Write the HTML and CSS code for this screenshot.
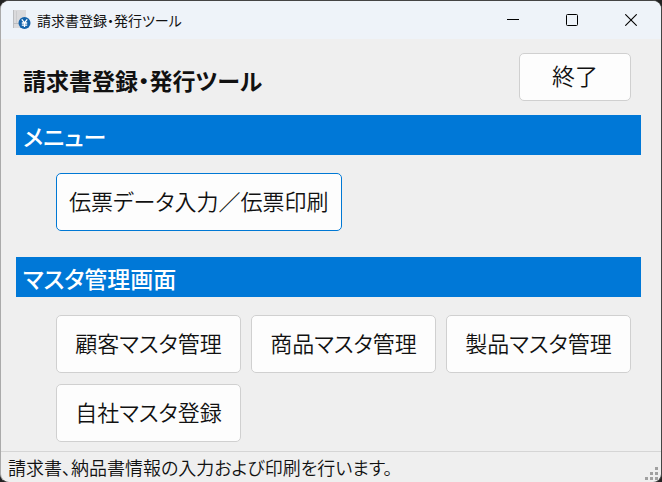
FILE: index.html
```html
<!DOCTYPE html>
<html lang="ja">
<head>
    <meta charset="UTF-8">
    <meta name="viewport" content="width=device-width, initial-scale=1.0">
    <title>請求書登録・発行ツール</title>
    <link rel="stylesheet" href="styles.css">
</head>
<body>

    <div class="window">
        <div class="titlebar">
            <svg class="app-icon" width="18" height="20" viewBox="0 0 18 20" aria-hidden="true">
                <rect x="0" y="0" width="13" height="18" fill="#dadadc"/>
                <path d="M0.5 0v18M1 13.5h6" stroke="#bbbdc0" fill="none"/>
                <path d="M3.5 1v12" stroke="#cbccce" fill="none"/>
                <circle cx="11.5" cy="13" r="6" fill="#1463ab"/>
                <path d="M8.8 9.3l2.7 3.5 2.7-3.5M11.5 12.8V17M8.8 13h5.4M8.8 15.1h5.4" stroke="#fff" stroke-width="1.3" fill="none"/>
            </svg>
            <span class="caption">請求書登録・発行ツール</span>
            <div class="window-buttons">
                <button type="button" aria-label="最小化">
                    <svg width="12" height="12" viewBox="0 0 12 12"><path d="M0 5.5h12" stroke="#000"/></svg>
                </button>
                <button type="button" aria-label="最大化">
                    <svg width="12" height="12" viewBox="0 0 12 12"><rect x="0.5" y="0.5" width="11" height="11" rx="1" fill="none" stroke="#000"/></svg>
                </button>
                <button type="button" aria-label="閉じる">
                    <svg width="12" height="12" viewBox="0 0 12 12"><path d="M0.3 0.3l11.4 11.4M11.7 0.3L0.3 11.7" stroke="#000" stroke-width="1.1"/></svg>
                </button>
            </div>
        </div>

        <main class="content">
            <div class="header">
                <h1>請求書登録・発行ツール</h1>
                <button type="button" class="btn btn-exit">終了</button>
            </div>

            <h2>メニュー</h2>
            <div class="menu">
                <button type="button" class="btn btn-default">伝票データ入力／伝票印刷</button>
            </div>

            <h2>マスタ管理画面</h2>
            <div class="menu master-menu">
                <button type="button" class="btn">顧客マスタ管理</button>
                <button type="button" class="btn">商品マスタ管理</button>
                <button type="button" class="btn">製品マスタ管理</button>
                <button type="button" class="btn">自社マスタ登録</button>
            </div>
        </main>

        <footer class="statusbar">
            <span>請求書、納品書情報の入力および印刷を行います。</span>
            <svg class="grip" width="14" height="14" viewBox="0 0 14 14" fill="#a0a0a0" aria-hidden="true">
                <path d="M10 1h3v3h-3zM5 6h3v3h-3zM10 6h3v3h-3zM0 11h3v3h-3zM5 11h3v3h-3zM10 11h3v3h-3z"/>
            </svg>
        </footer>
    </div>

</body>
</html>
```

FILE: styles.css
```css
* {
    box-sizing: border-box;
}

body {
    margin: 0;
    background-color: #222;
    color: #111;
    font-family: "Noto Sans CJK JP", sans-serif;
    font-feature-settings: "palt";
}

.window {
    display: flex;
    flex-direction: column;
    min-height: 100vh;
    background-color: #efefef;
    border: 1px solid #444;
    border-left-color: #aaa;
    border-radius: 9px;
    overflow: hidden;
}

.titlebar {
    display: flex;
    align-items: center;
    height: 38px;
    padding: 0 1px 0 12px;
    background-color: #eef3f9;
}

.app-icon {
    margin-right: 6px;
}

.caption {
    font-size: 14px;
    line-height: 20px;
}

.window-buttons {
    display: flex;
    align-self: stretch;
    margin-left: auto;
}

.window-buttons button {
    display: flex;
    align-items: center;
    justify-content: center;
    width: 59px;
    padding: 0;
    border: none;
    background: none;
}

/* メイン */
.content {
    flex: 1;
    padding: 14px 20px 9px 15px;
}

.header {
    display: flex;
    align-items: center;
    justify-content: space-between;
    padding: 0 10px 0 7px;
    margin-bottom: 14px;
}

h1 {
    margin: 6px 0 0;
    font-size: 23px;
    line-height: 32px;
}

h2 {
    margin: 0;
    padding: 2px 7px 0;
    background-color: #0078d7;
    color: #fff;
    font-size: 23px;
    font-weight: 500;
    line-height: 38px;
}

.menu {
    padding: 18px 10px 26px 40px;
}

.master-menu {
    display: grid;
    grid-template-columns: repeat(3, 1fr);
    gap: 11px 10px;
    padding-bottom: 0;
}

.btn {
    min-height: 58px;
    padding: 0 12px 5px;
    border: 1px solid #d0d0d0;
    border-radius: 5px;
    background-color: #fdfdfd;
    color: #111;
    font-family: inherit;
    font-feature-settings: inherit;
    font-size: 22px;
    font-weight: 350;
    line-height: 32px;
    white-space: nowrap;
}

.btn-exit {
    min-height: 48px;
    padding: 0 32px 5px;
    font-size: 23px;
}

.btn-default {
    display: block;
    border-color: #0078d4;
}

/* ステータスバー */
.statusbar {
    display: flex;
    align-items: center;
    justify-content: space-between;
    height: 31px;
    padding: 0 2px 0 7px;
    border-top: 1px solid #d5d5d5;
    font-size: 18px;
    font-weight: 350;
    line-height: 28px;
}

.grip {
    align-self: flex-end;
    margin-bottom: 2px;
}
```
